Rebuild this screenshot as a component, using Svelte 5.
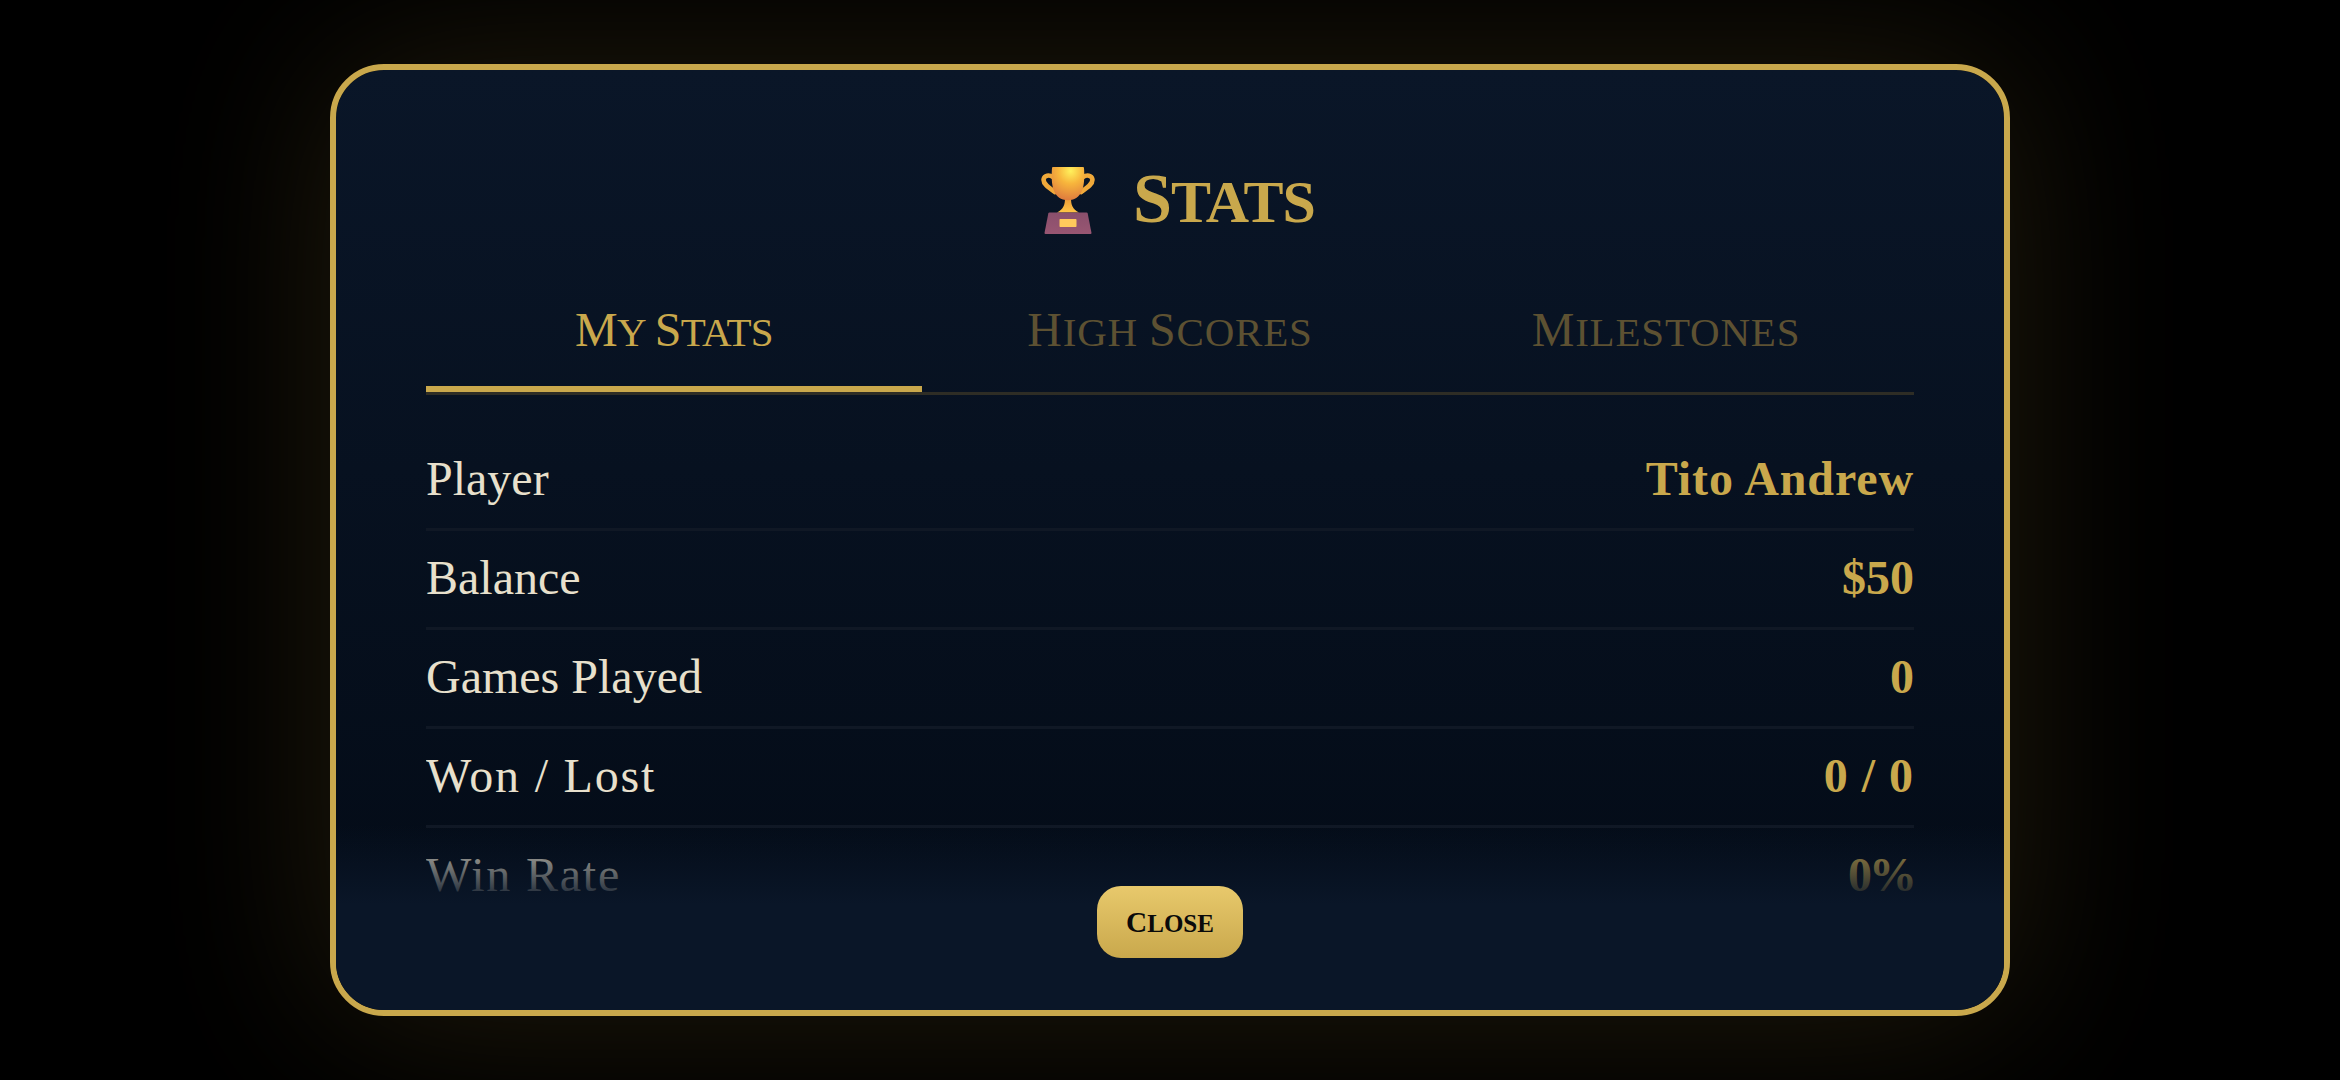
<script>
  const tabs = [
    { words: 'My Stats'.split(' '), active: true, tight: true },
    { words: 'High Scores'.split(' '), active: false },
    { words: ['Milestones'], active: false }
  ];
  const rows = [
    { label: 'Player', value: 'Tito Andrew', kind: 'name' },
    { label: 'Balance', value: '$50' },
    { label: 'Games Played', value: '0' },
    { label: 'Won / Lost', value: '0 / 0', wide: true, kind: 'loose' },
    { label: 'Win Rate', value: '0%', wide: true, kind: 'tight' }
  ];
</script>

<div class="page">
  <section class="modal">
    <h1 class="title">
      <svg class="trophy" viewBox="0 0 54 67" aria-hidden="true">
        <defs>
          <radialGradient id="cup" cx="0.58" cy="0.12" r="0.85">
            <stop offset="0" stop-color="#fff15c" />
            <stop offset="0.45" stop-color="#f7b53c" />
            <stop offset="1" stop-color="#e07f3e" />
          </radialGradient>
          <linearGradient id="foot" x1="0" y1="0" x2="0" y2="1">
            <stop offset="0" stop-color="#e89a38" />
            <stop offset="1" stop-color="#ffc445" />
          </linearGradient>
          <linearGradient id="base" x1="0" y1="0" x2="0" y2="1">
            <stop offset="0" stop-color="#8a4f6c" />
            <stop offset="1" stop-color="#985672" />
          </linearGradient>
        </defs>
        <path d="M12 10 C8 7.5 3.4 8.3 2.6 12.2 C2 17 7.5 20.5 14 25" fill="none" stroke="#f0a93a" stroke-width="4.6" stroke-linecap="round" />
        <path d="M42 10 C46 7.5 50.6 8.3 51.4 12.2 C52 17 46.5 20.5 40 25" fill="none" stroke="#f0a93a" stroke-width="4.6" stroke-linecap="round" />
        <path d="M24 31 H30 C30 38 31.5 42 38 45.5 H16 C22.5 42 24 38 24 31 Z" fill="url(#foot)" />
        <path d="M11 1 Q11 0 12 0 H42 Q43 0 43 1 C44 15 43 29 32 32.5 Q27 34 22 32.5 C11 29 10 15 11 1 Z" fill="url(#cup)" />
        <path d="M8.5 45.5 H45.5 Q46.5 45.5 46.7 46.5 L50.5 66 Q50.5 67 49.5 67 H4.5 Q3.5 67 3.5 66 L7.3 46.5 Q7.5 45.5 8.5 45.5 Z" fill="url(#base)" />
        <rect x="18.5" y="52" width="17" height="8" rx="0.8" fill="#ffc95c" />
      </svg>
      <span class="word">Stats</span>
    </h1>

    <nav class="tabs">
      {#each tabs as tab}
        <button class="tab" class:active={tab.active} class:tight={tab.tight}>
          {#each tab.words as word, i}{#if i}{' '}{/if}<span class="word">{word}</span>{/each}
        </button>
      {/each}
    </nav>

    <div class="list">
      {#each rows as row}
        <div class="row">
          <span class="label" class:wide={row.wide}>{row.label}</span>
          <span class="value {row.kind ?? ''}">{row.value}</span>
        </div>
      {/each}
    </div>

    <footer class="footer">
      <button class="close"><span class="word">Close</span></button>
    </footer>
  </section>
</div>

<style>
  :global(body) {
    margin: 0;
    background: #000;
  }

  .page {
    --gold: #c9a84c;
    min-height: 1080px;
    display: flex;
    align-items: center;
    justify-content: center;
    overflow: hidden;
    font-family: "Liberation Serif", serif;
  }

  .modal {
    position: relative;
    box-sizing: border-box;
    width: 1680px;
    height: 952px;
    padding: 0 90px;
    display: flex;
    flex-direction: column;
    overflow: hidden;
    border: 6px solid var(--gold);
    border-radius: 54px;
    background: linear-gradient(180deg, #0a1628 0%, #040c18 85%);
    box-shadow: 0 0 180px rgba(201, 168, 76, 0.17);
    background-clip: padding-box;
  }

  .word {
    display: inline-block;
    text-transform: uppercase;
  }

  .word::first-letter {
    font-size: 1.17em;
  }

  .title {
    margin: 0;
    padding-top: 92px;
    height: 76px;
    display: flex;
    align-items: center;
    justify-content: center;
    gap: 38px;
    color: var(--gold);
    font-size: 60px;
    font-weight: 700;
    letter-spacing: -1px;
    line-height: 76px;
  }

  .trophy {
    width: 54px;
    height: 67px;
    flex: none;
    margin-left: 16px;
  }

  .tabs {
    margin-top: 46px;
    display: grid;
    grid-template-columns: repeat(3, 1fr);
    border-bottom: 3px solid #2e2d25;
  }

  .tab {
    box-sizing: content-box;
    height: 92px;
    padding: 0 0 10px;
    border: 0;
    border-bottom: 6px solid transparent;
    background: none;
    color: #5d5132;
    font-family: inherit;
    font-size: 41px;
    letter-spacing: 0.8px;
    line-height: 1;
  }

  .tab.tight {
    letter-spacing: -0.6px;
    word-spacing: -1px;
  }

  .tab.active {
    color: var(--gold);
    border-bottom-color: var(--gold);
  }

  .list {
    margin-top: 37px;
    flex: 1;
    min-height: 0;
    overflow: hidden;
  }

  .row {
    box-sizing: border-box;
    height: 99px;
    display: flex;
    align-items: center;
    justify-content: space-between;
    padding-bottom: 3px;
    border-bottom: 3px solid #101825;
    font-size: 48px;
    line-height: 60px;
  }

  .label {
    color: #e8e0cc;
  }

  .label.wide {
    letter-spacing: 1.8px;
  }

  .value {
    color: var(--gold);
    font-weight: 700;
  }

  .value.loose {
    letter-spacing: 1px;
  }

  .value.tight {
    letter-spacing: -3px;
  }

  .value.name {
    letter-spacing: 0.9px;
  }

  .footer {
    position: absolute;
    left: 0;
    right: 0;
    bottom: 0;
    height: 185px;
    display: flex;
    justify-content: center;
    align-items: flex-end;
    padding-bottom: 52px;
    box-sizing: border-box;
    background: linear-gradient(180deg, rgba(10, 22, 40, 0) 0%, #0a1628 43%);
  }

  .close {
    width: 146px;
    height: 72px;
    padding: 0;
    border: 0;
    border-radius: 24px;
    background: linear-gradient(180deg, #e8c96c, #c9a84c);
    color: #0a0a0a;
    font-family: inherit;
    font-size: 25px;
    font-weight: 700;
  }
</style>
